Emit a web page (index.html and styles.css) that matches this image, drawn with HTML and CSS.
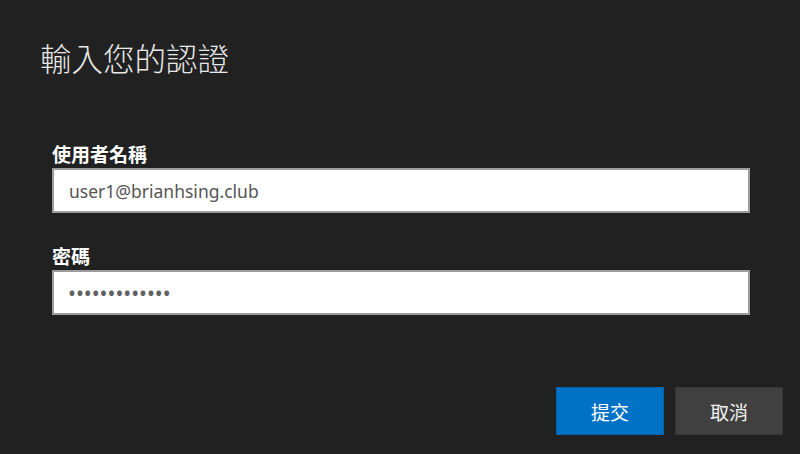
FILE: index.html
```html
<!DOCTYPE html>
<html lang="zh-Hant">
<head>
<meta charset="utf-8">
<link rel="stylesheet" href="styles.css">
</head>
<body>
<div class="dialog">
  <h1 class="title">輸入您的認證</h1>
  <div class="form">
    <label class="label">使用者名稱</label>
    <div class="field">user1@brianhsing.club</div>
    <label class="label label-pw">密碼</label>
    <div class="field field-pw">•••••••••••••</div>
  </div>
  <div class="actions">
    <button class="btn btn-primary">提交</button>
    <button class="btn btn-secondary">取消</button>
  </div>
</div>
</body>
</html>
```
FILE: styles.css
```css
html, body {
  margin: 0;
  padding: 0;
  background: #212121;
  height: 100%;
}
body {
  font-family: "Noto Sans", "Noto Sans CJK TC", sans-serif;
}
.dialog {
  display: flex;
  flex-direction: column;
  height: 454px;
  box-sizing: border-box;
  padding: 37px 17px 19px 40px;
}
.title {
  margin: 0;
  font-family: "Noto Sans CJK TC", sans-serif;
  font-weight: 300;
  font-size: 31.5px;
  line-height: 40px;
  color: #e8e8e8;
}
.form {
  display: flex;
  flex-direction: column;
  margin-top: 65px;
  padding-left: 12px;
  padding-right: 33px;
}
.label {
  font-family: "Noto Sans CJK TC", sans-serif;
  font-weight: 700;
  font-size: 19px;
  line-height: 24px;
  color: #ffffff;
  margin-bottom: 2px;
}
.label-pw {
  margin-top: 31px;
}
.field {
  height: 45px;
  box-sizing: border-box;
  background: #ffffff;
  border: 2px solid #9c9c9c;
  padding: 0 15px;
  display: flex;
  align-items: center;
  font-family: "Noto Sans", sans-serif;
  font-size: 17.5px;
  color: #555555;
}
.field-pw {
  font-size: 21px;
  letter-spacing: 0;
  color: #606060;
  padding-left: 14px;
}
.actions {
  margin-top: auto;
  display: flex;
  justify-content: flex-end;
  gap: 11px;
}
.btn {
  width: 108px;
  height: 48px;
  box-sizing: border-box;
  font-family: "Noto Sans CJK TC", sans-serif;
  font-size: 19px;
  color: #ffffff;
  cursor: pointer;
  padding: 0;
}
.btn-primary {
  background: #0072c6;
  border: 1px solid #0062a8;
}
.btn-secondary {
  background: #404040;
  border: 1px solid #363636;
  color: #f0f0f0;
}
```
